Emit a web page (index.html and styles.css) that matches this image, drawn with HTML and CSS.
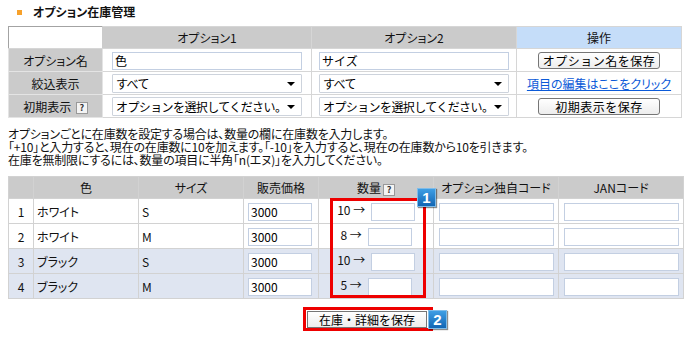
FILE: index.html
```html
<!DOCTYPE html>
<html lang="ja">
<head>
    <meta charset="UTF-8">
    <title>オプション在庫管理</title>
    <link rel="stylesheet" href="styles.css">
</head>
<body>
<div class="page">
    <h2 class="title"><span class="title-mark"></span>オプション在庫管理</h2>

    <table class="option-table">
        <colgroup>
            <col style="width:94px">
            <col style="width:209px">
            <col style="width:205px">
            <col style="width:165px">
        </colgroup>
        <tr class="head">
            <th class="blank"></th>
            <th>オプション1</th>
            <th>オプション2</th>
            <th class="ops">操作</th>
        </tr>
        <tr>
            <th class="label">オプション名</th>
            <td><input class="text wide" type="text" value="色"></td>
            <td><input class="text wide" type="text" value="サイズ"></td>
            <td><button class="btn">オプション名を保存</button></td>
        </tr>
        <tr>
            <th class="label">絞込表示</th>
            <td><span class="select"><select><option>すべて</option></select></span></td>
            <td><span class="select"><select><option>すべて</option></select></span></td>
            <td><a class="edit-link" href="#">項目の編集はここをクリック</a></td>
        </tr>
        <tr>
            <th class="label">初期表示 <span class="help">?</span></th>
            <td><span class="select"><select><option>オプションを選択してください。</option></select></span></td>
            <td><span class="select"><select><option>オプションを選択してください。</option></select></span></td>
            <td><button class="btn">初期表示を保存</button></td>
        </tr>
    </table>

    <div class="note">
        <div>オプションごとに在庫数を設定する場合は、数量の欄に在庫数を入力します。</div>
        <div>「+10」と入力すると、現在の在庫数に10を加えます。「-10」を入力すると、現在の在庫数から10を引きます。</div>
        <div>在庫を無制限にするには、数量の項目に半角「n(エヌ)」を入力してください。</div>
    </div>

    <div class="stock-area">
        <table class="stock-table">
            <colgroup>
                <col style="width:25px">
                <col style="width:105px">
                <col style="width:105px">
                <col style="width:75px">
                <col style="width:115px">
                <col style="width:125px">
                <col style="width:125px">
            </colgroup>
            <tr class="head">
                <th></th>
                <th>色</th>
                <th>サイズ</th>
                <th>販売価格</th>
                <th>数量<span class="help">?</span></th>
                <th>オプション独自コード</th>
                <th>JANコード</th>
            </tr>
            <tr>
                <td class="num">1</td>
                <td>ホワイト</td>
                <td>S</td>
                <td><input class="text price" type="text" value="3000"></td>
                <td class="qty">10 → <input class="text small" type="text"></td>
                <td class="code"><input class="text code-input" type="text"></td>
                <td class="code"><input class="text code-input" type="text"></td>
            </tr>
            <tr>
                <td class="num">2</td>
                <td>ホワイト</td>
                <td>M</td>
                <td><input class="text price" type="text" value="3000"></td>
                <td class="qty">8 → <input class="text small" type="text"></td>
                <td class="code"><input class="text code-input" type="text"></td>
                <td class="code"><input class="text code-input" type="text"></td>
            </tr>
            <tr class="alt">
                <td class="num">3</td>
                <td>ブラック</td>
                <td>S</td>
                <td><input class="text price" type="text" value="3000"></td>
                <td class="qty">10 → <input class="text small" type="text"></td>
                <td class="code"><input class="text code-input" type="text"></td>
                <td class="code"><input class="text code-input" type="text"></td>
            </tr>
            <tr class="alt">
                <td class="num">4</td>
                <td>ブラック</td>
                <td>M</td>
                <td><input class="text price" type="text" value="3000"></td>
                <td class="qty">5 → <input class="text small" type="text"></td>
                <td class="code"><input class="text code-input" type="text"></td>
                <td class="code"><input class="text code-input" type="text"></td>
            </tr>
        </table>

        <!-- 注記用の赤枠 -->
        <div class="mark mark-qty"><span class="badge">1</span></div>

        <div class="save-row">
            <span class="mark-save">
                <button class="btn save-btn">在庫・詳細を保存</button>
                <span class="badge">2</span>
            </span>
        </div>
    </div>
</div>
</body>
</html>
```

FILE: styles.css
```css
body {
    margin: 0;
    font-family: "Noto Sans CJK JP", sans-serif;
    font-size: 12px;
    font-feature-settings: "palt";
    color: #111;
    background: #fff;
}

.page {
    padding: 0 8px;
}

.title {
    display: flex;
    align-items: flex-start;
    margin: 0;
    padding: 4px 0 0 9px;
    height: 26px;
    box-sizing: border-box;
    font-size: 12px;
    line-height: 16px;
    font-weight: bold;
}

.title-mark {
    width: 5px;
    height: 5px;
    margin: 6px 11px 0 0;
    background: #f7a12b;
}

/* 上の表 */
.option-table {
    width: 673px;
    table-layout: fixed;
    border-collapse: collapse;
    border: 1px solid #a3a3a3;
}

.option-table th,
.option-table td {
    height: 22px;
    padding: 0;
    border: 1px solid #d6d6d6;
    font-weight: normal;
    text-align: center;
    vertical-align: middle;
}

.option-table .head th {
    height: 21px;
    background: #cbcbcb;
}

.option-table .head th.blank {
    background: #fff;
    border-color: #a3a3a3 #cbcbcb #d6d6d6 #a3a3a3;
}

.option-table .head th.ops {
    background: #c5ddf9;
}

.option-table th.label {
    background: #cbcbcb;
    border-color: #e4e4e4;
}

.text {
    box-sizing: border-box;
    height: 18px;
    margin: 0;
    padding: 0 2px;
    border: 1px solid #c3cfe2;
    background: #fff;
    font-family: inherit;
    font-size: 12px;
    color: #000;
    vertical-align: middle;
}

.text.wide {
    width: 190px;
}

.select {
    position: relative;
    display: inline-block;
    width: 190px;
    height: 19px;
    vertical-align: middle;
}

.select select {
    width: 100%;
    height: 100%;
    margin: 0;
    padding: 0 12px 0 3px;
    border: 1px solid #cdd3dc;
    border-radius: 1px;
    background: #fff;
    font-family: inherit;
    font-size: 12px;
    letter-spacing: -0.6px;
    color: #000;
    appearance: none;
    -webkit-appearance: none;
}

.select::after {
    content: '';
    position: absolute;
    right: 7px;
    top: 8px;
    border-left: 4px solid transparent;
    border-right: 4px solid transparent;
    border-top: 4px solid #000;
    pointer-events: none;
}

.btn {
    height: 17px;
    padding: 0;
    border: 1px solid #767676;
    border-radius: 3px;
    background: linear-gradient(#ffffff, #ededed);
    font-family: inherit;
    font-size: 12px;
    line-height: 15px;
    letter-spacing: 0.5px;
    color: #000;
    cursor: pointer;
}

.option-table .btn {
    width: 122px;
}

.edit-link {
    color: #0b5ad8;
    text-decoration: underline;
}

.help {
    display: inline-block;
    box-sizing: border-box;
    width: 12px;
    height: 12px;
    margin-left: 2px;
    border: 1px solid #999;
    background: #f4f4f4;
    font-size: 9px;
    font-weight: bold;
    line-height: 10px;
    text-align: center;
    vertical-align: middle;
    color: #333;
}

.note {
    margin: 9px 0 10px;
    line-height: 13px;
    letter-spacing: -0.2px;
}

.note div {
    height: 13px;
}

/* 在庫の表 */
.stock-area {
    position: relative;
}

.stock-table {
    width: 675px;
    table-layout: fixed;
    border-collapse: collapse;
    border: 1px solid #a3a3a3;
}

.stock-table th,
.stock-table td {
    height: 24px;
    padding: 0 0 0 3px;
    border: 1px solid #d2d2d2;
    text-align: left;
    vertical-align: middle;
    white-space: nowrap;
}

.stock-table .head th {
    height: 21px;
    padding: 0;
    background: #cbcbcb;
    font-weight: normal;
    text-align: center;
}

.stock-table .alt td {
    background: #dfe5f1;
}

.stock-table td.num {
    padding: 0;
    text-align: center;
}

.stock-table td.qty {
    padding: 0;
    text-align: center;
}

.stock-table td.code {
    padding: 0;
    text-align: center;
}

.text.price {
    width: 64px;
    margin-left: 1px;
}

.text.small {
    width: 44px;
    margin-left: 3px;
}

.text.code-input {
    width: 115px;
}

/* 赤枠と番号 */
.mark {
    position: absolute;
    box-sizing: border-box;
    border: 3px solid #ee0000;
}

.mark-qty {
    left: 322px;
    top: 22px;
    width: 96px;
    height: 100px;
}

.mark-qty .badge {
    left: 84px;
    top: -13px;
}

.badge {
    position: absolute;
    box-sizing: border-box;
    width: 19px;
    height: 19px;
    border: 1px solid #7fbce9;
    background: linear-gradient(#3e9ee4, #1266b4);
    box-shadow: 1px 1px 1px rgba(0, 0, 0, 0.45);
    font-family: "Liberation Sans", sans-serif;
    font-size: 15px;
    font-weight: bold;
    line-height: 17px;
    text-align: center;
    color: #fff;
}

.save-row {
    display: flex;
    padding: 8px 0 0 295px;
}

.mark-save {
    position: relative;
    display: flex;
    align-items: center;
    width: 130px;
    height: 24px;
    box-sizing: border-box;
    padding: 0 0 0 1px;
    border: 3px solid #ee0000;
}

.save-btn {
    width: 120px;
    letter-spacing: 0;
    border-radius: 0;
}

.mark-save .badge {
    left: 122px;
    top: 0;
}
```
